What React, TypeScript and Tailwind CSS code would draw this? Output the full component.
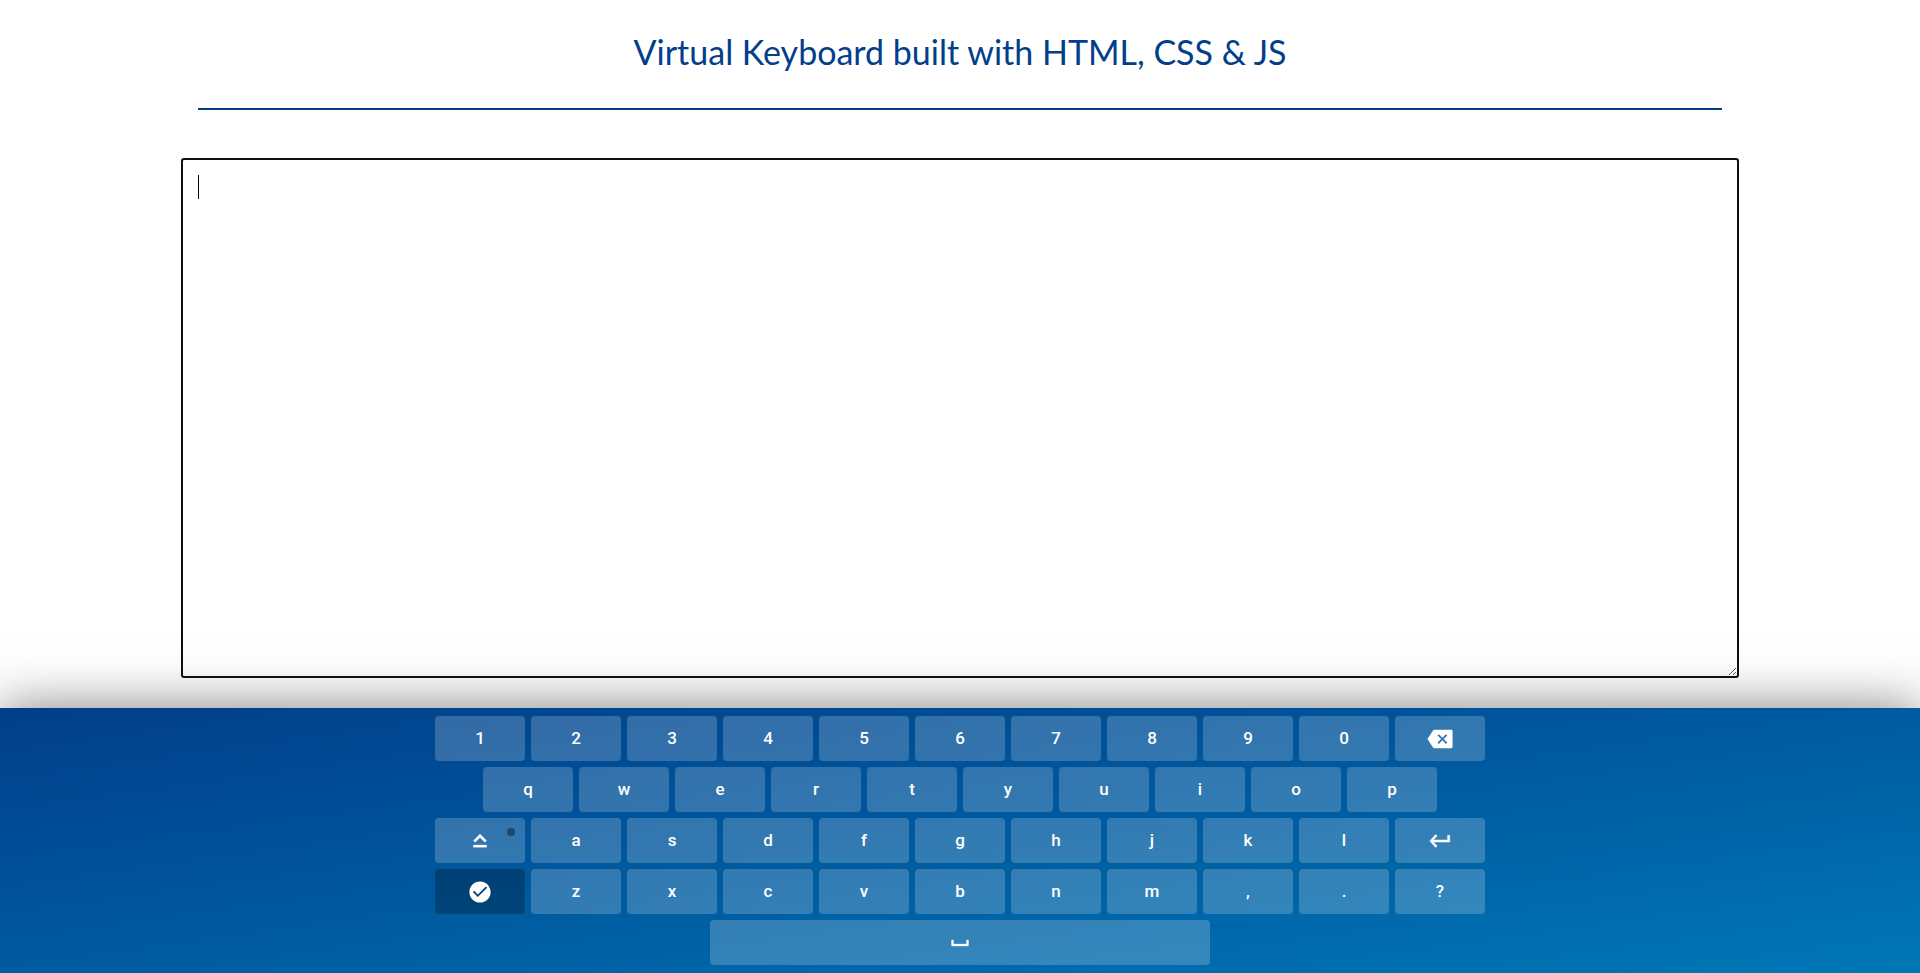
import { useRef, useState } from "react";
import type { ReactNode } from "react";

type IconProps = { children: ReactNode };

function Icon({ children }: IconProps) {
  return (
    <svg viewBox="0 0 24 24" className="size-[26px] fill-current" aria-hidden="true">
      {children}
    </svg>
  );
}

const ROWS: string[][] = [
  ["1", "2", "3", "4", "5", "6", "7", "8", "9", "0", "backspace"],
  ["q", "w", "e", "r", "t", "y", "u", "i", "o", "p"],
  ["caps", "a", "s", "d", "f", "g", "h", "j", "k", "l", "enter"],
  ["done", "z", "x", "c", "v", "b", "n", "m", ",", ".", "?"],
  ["space"],
];

const ICONS: Record<string, ReactNode> = {
  backspace: (
    <Icon>
      <path
        fillRule="evenodd"
        d="M22.300 3.500H7c-.7 0-1.200.3-1.600.9L.4 12l5 7.600c.4.6.9.9 1.600.9h15.300c.8 0 1.300-.5 1.300-1.300V4.800c0-.8-.5-1.300-1.300-1.300zM18.700 15.300l-1.200 1.200-3.300-3.300-3.300 3.300-1.200-1.200L13 12 9.700 8.700l1.200-1.200 3.300 3.300 3.300-3.300 1.200 1.200L15.400 12z"
      />
    </Icon>
  ),
  caps: (
    <Icon>
      <path
        className="stroke-current"
        strokeWidth=".3"
        d="M12 8.800 16.400 13.200 18 11.600 12 5.600 6 11.600 7.600 13.200zM5.900 17.800h12.200v-2H5.900z"
      />
    </Icon>
  ),
  enter: (
    <Icon>
      <path
        className="stroke-current"
        strokeWidth=".4"
        d="M19 6.800V11H5.800l3.600-3.600L8 6l-5.400 6L8 18l1.400-1.400L5.800 13H21V6.800z"
      />
    </Icon>
  ),
  done: (
    <Icon>
      <path
        fillRule="evenodd"
        d="M12 2.200C6.500 2.200 2.200 6.500 2.200 12s4.300 9.800 9.800 9.800 9.800-4.300 9.800-9.800S17.500 2.200 12 2.200zm-2 14.500-4.600-4.600 1.200-1.200 3.400 3.400 7.400-7.400 1.200 1.200z"
      />
    </Icon>
  ),
  space: (
    <Icon>
      <path className="stroke-current" strokeWidth=".3" d="M18 9.200V13H6V9.200H4.200V14.800h15.600V9.200z" />
    </Icon>
  ),
};

type KeyProps = {
  name: string;
  caps: boolean;
  onPress: (name: string) => void;
};

function Key({ name, caps, onPress }: KeyProps) {
  const icon = ICONS[name];
  const width = name === "space" ? "w-[500px]" : "w-[90px]";
  const fill = name === "done" ? "bg-black/25" : "bg-white/20";
  return (
    <button
      type="button"
      aria-label={icon ? name : undefined}
      aria-pressed={name === "caps" ? caps : undefined}
      onClick={() => onPress(name)}
      className={`relative flex h-[45px] items-center justify-center rounded font-[Roboto,sans-serif] text-[17px] font-medium text-white ${width} ${fill}`}
    >
      {icon ?? (caps ? name.toUpperCase() : name)}
      {name === "caps" && (
        <span
          className={`absolute top-2.5 right-2.5 size-2 rounded-full ${caps ? "bg-[#08ff00]" : "bg-black/40"}`}
        />
      )}
    </button>
  );
}

export default function App() {
  const [text, setText] = useState("");
  const [caps, setCaps] = useState(false);
  const field = useRef<HTMLTextAreaElement>(null);

  const press = (name: string) => {
    if (name === "backspace") setText((t) => t.slice(0, -1));
    else if (name === "caps") setCaps((c) => !c);
    else if (name === "enter") setText((t) => t + "\n");
    else if (name === "space") setText((t) => t + " ");
    else if (name === "done") field.current?.blur();
    else setText((t) => t + (caps ? name.toUpperCase() : name));
  };

  return (
    <div className="flex min-h-screen flex-col bg-white font-['Liberation_Sans',Arial,sans-serif]">
      <main className="flex flex-1 flex-col px-[181px] pb-[30px]">
        <h1 className="mx-[17px] border-b-2 border-[#023e8a] pt-8 pb-9 text-center font-[Lato,sans-serif] text-[34px] leading-10 text-[#023e8a]">
          Virtual Keyboard built with HTML, CSS &amp; JS
        </h1>
        <div className="relative mt-12 flex flex-1">
          <textarea
            ref={field}
            aria-label="Typed text"
            value={text}
            onChange={(e) => setText(e.target.value)}
            className="w-full flex-1 resize rounded-[3px] border-2 border-[#101010] px-[15px] py-3.5 text-[21px] leading-6 text-black outline-none"
          />
          {text === "" && (
            <span className="pointer-events-none absolute top-[17px] left-[17px] h-6 w-px bg-black" />
          )}
        </div>
      </main>
      <section
        aria-label="Keyboard"
        className="relative flex flex-col items-center gap-1.5 bg-linear-to-br from-[#023e8a] to-[#0077b6] py-2 shadow-[0_0_50px_rgba(0,0,0,0.5)]"
      >
        {ROWS.map((row) => (
          <div key={row[0]} className="flex gap-1.5">
            {row.map((name) => (
              <Key key={name} name={name} caps={caps} onPress={press} />
            ))}
          </div>
        ))}
      </section>
    </div>
  );
}
